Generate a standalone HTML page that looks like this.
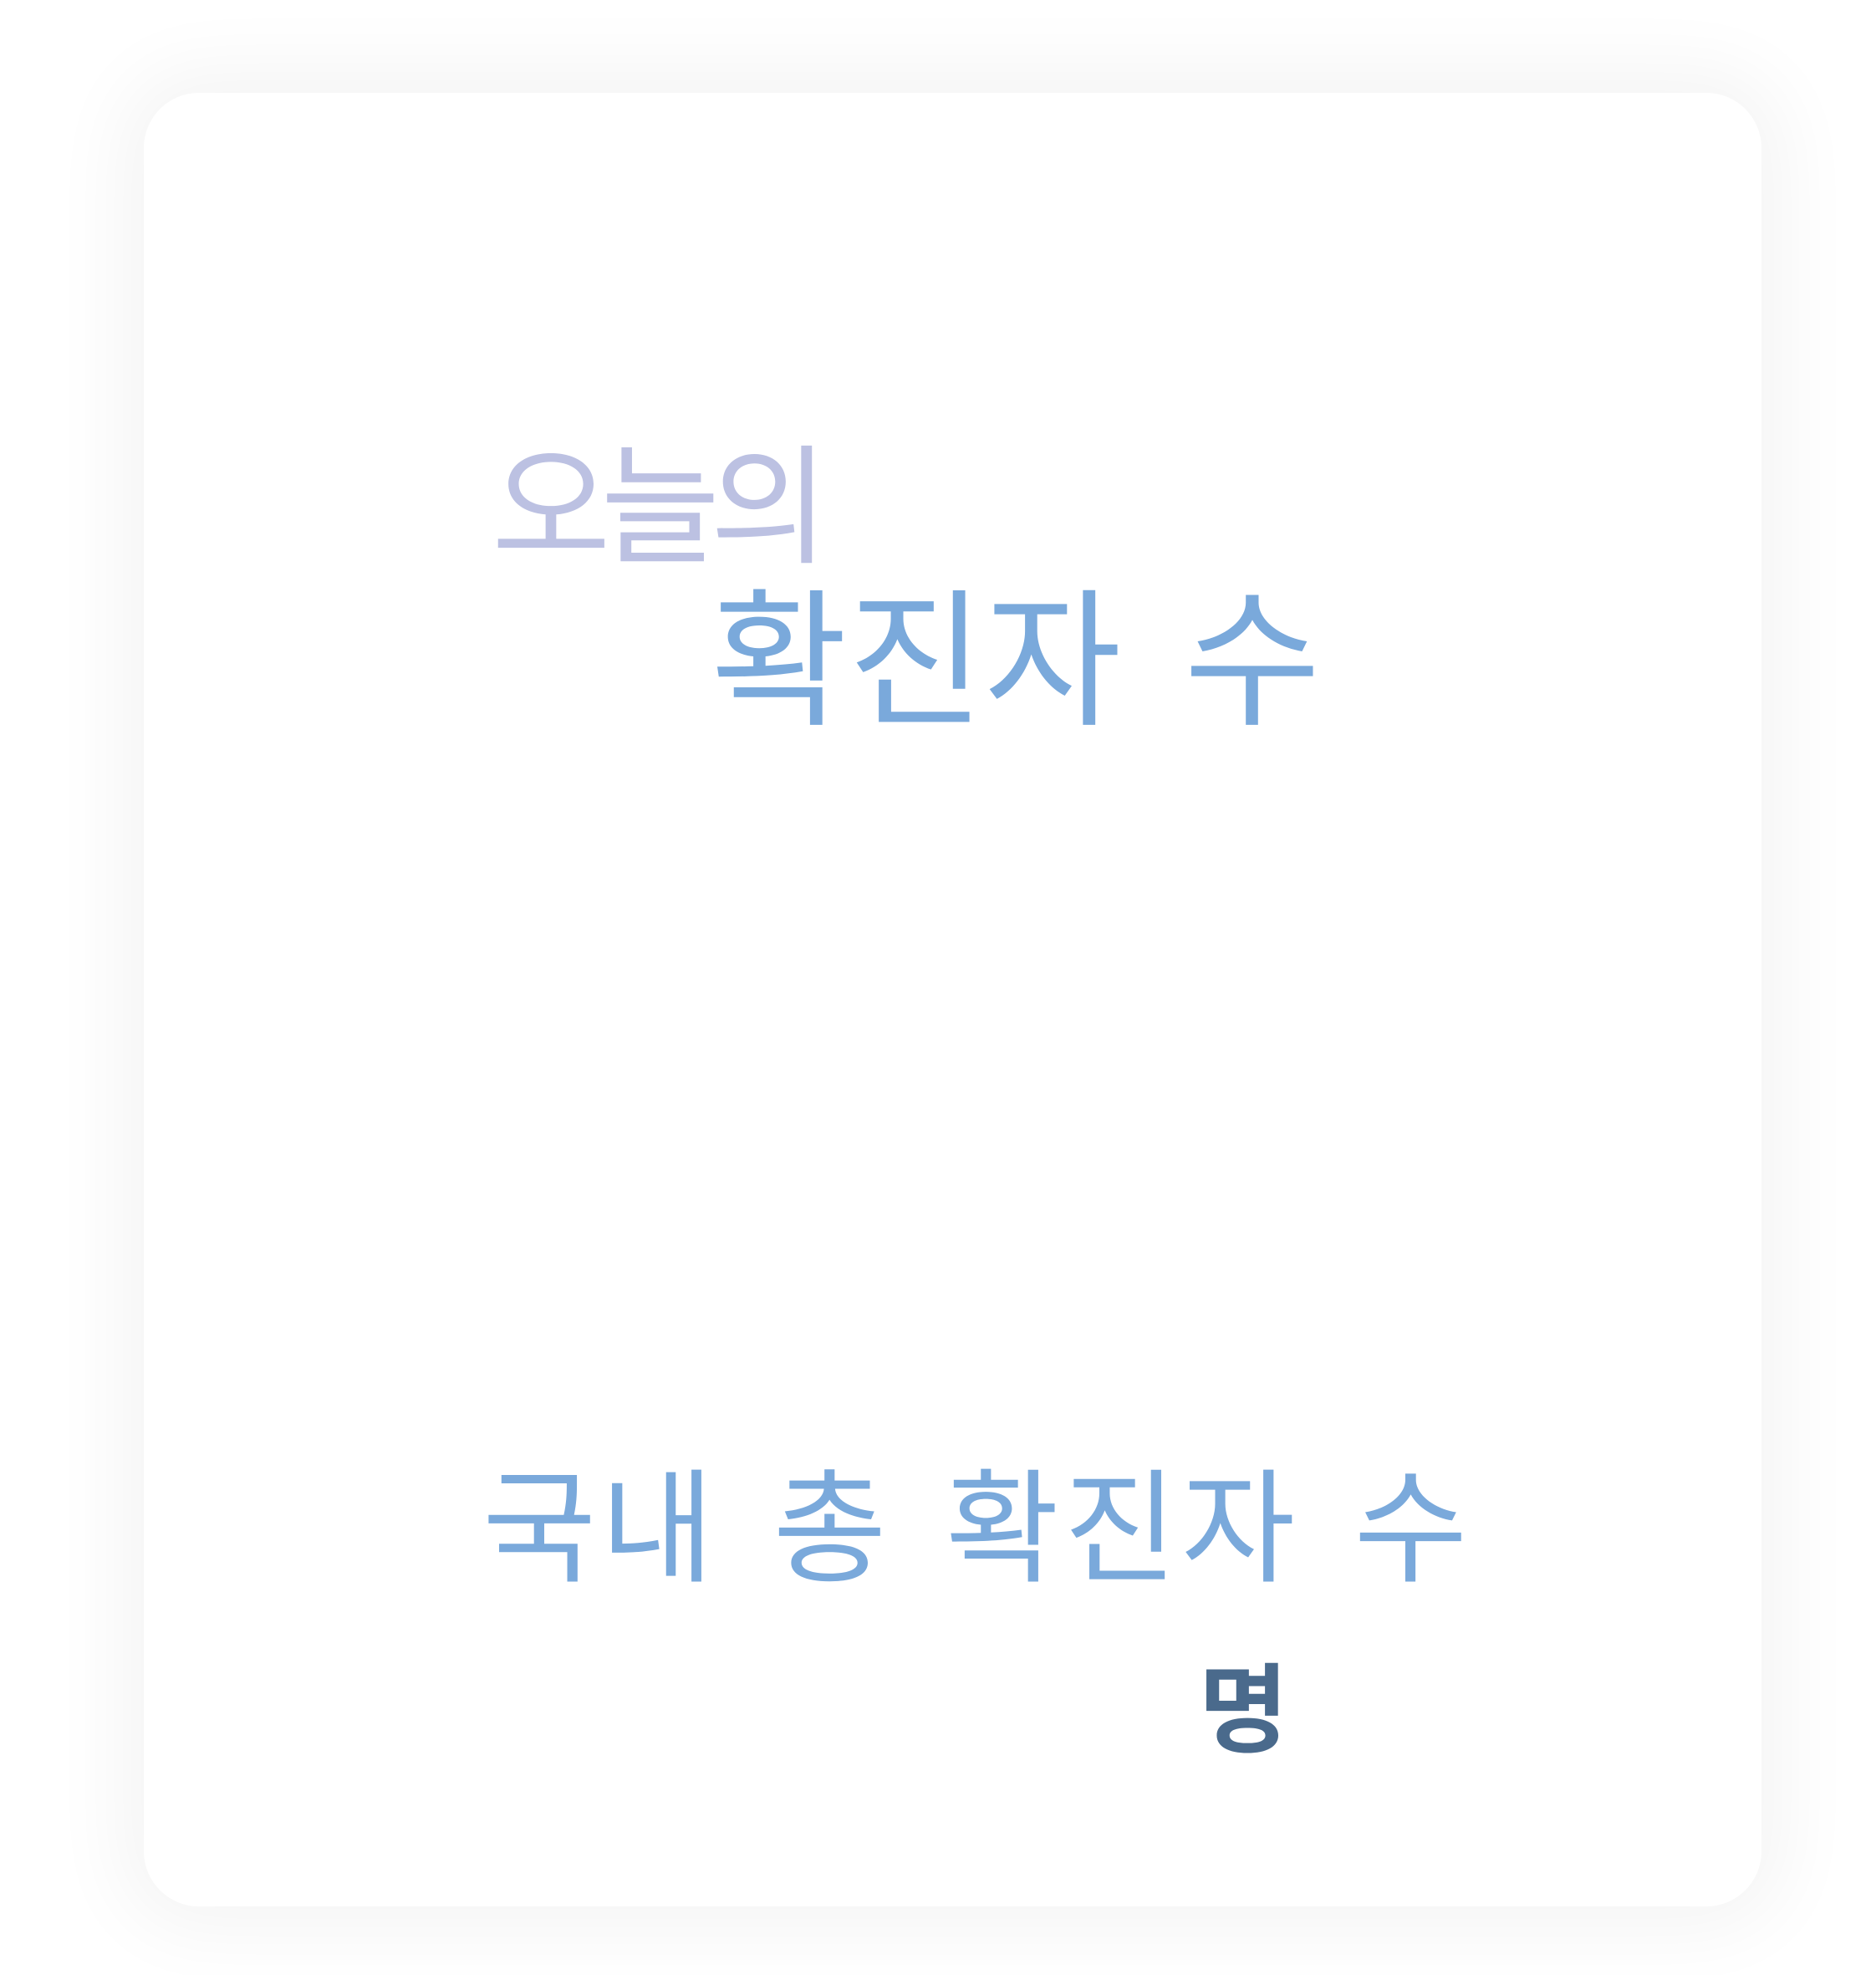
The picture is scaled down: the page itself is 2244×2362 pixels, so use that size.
<!DOCTYPE html>
<html><head><meta charset="utf-8"><style>
html,body{margin:0;padding:0;background:#fff;}
body{width:2244px;height:2362px;position:relative;overflow:hidden;font-family:"Liberation Sans","Noto Sans CJK KR",sans-serif;}
.card{position:absolute;left:172px;top:111px;width:1935px;height:2169px;background:#fff;border-radius:66px;box-shadow:0 0 90px 30px rgba(0,0,0,0.045);}
.t{position:absolute;line-height:1;white-space:pre;font-family:"Noto Sans CJK KR",sans-serif;}
</style></head><body>
<div class="card"></div>
<div class="t" style="left:588px;top:516px;font-size:155px;letter-spacing:-12px;color:#bcc1e2;">오늘의</div>
<div class="t" style="left:850px;top:688px;font-size:178px;word-spacing:35px;color:#7aa9db;">확진자 수</div>
<div class="t" style="left:577px;top:1742px;font-size:148px;letter-spacing:5px;word-spacing:27px;color:#7aa9db;">국내 총 확진자 수</div>
<div class="t" style="left:1434px;top:1978px;font-size:116px;font-weight:bold;color:#4a6a8c;">명</div>
</body></html>
